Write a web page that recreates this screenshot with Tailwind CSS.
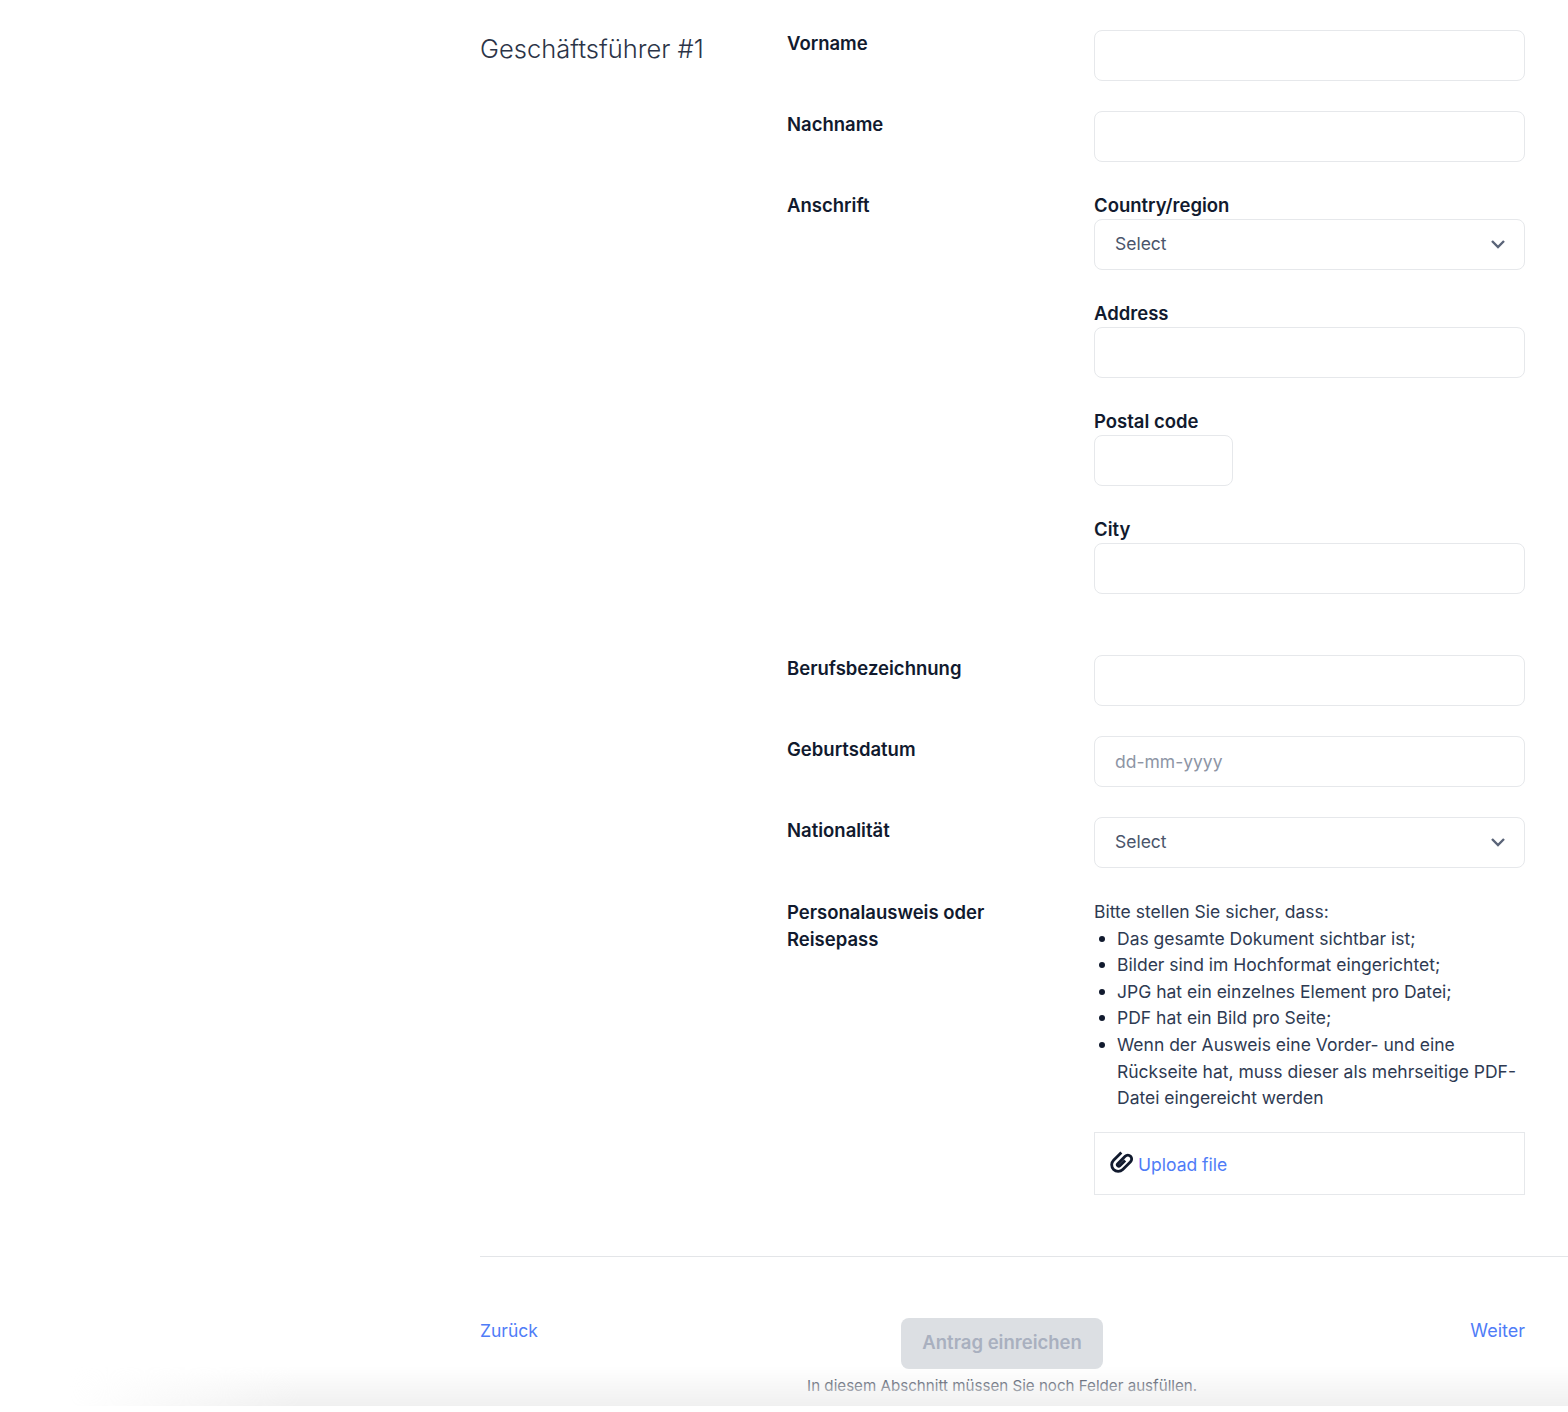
<!DOCTYPE html>
<html lang="de">
<head>
    <meta charset="UTF-8">
    <meta name="viewport" content="width=device-width, initial-scale=1.0">
    <title>Geschäftsführer</title>
    <script src="https://cdn.jsdelivr.net/npm/@tailwindcss/browser@4"></script>
</head>
<body class="relative h-[1412px] overflow-hidden bg-white font-['Inter',sans-serif] text-[17.5px] text-[#2e3a52]">
    <div class="pl-[480px]">
        <div class="flex pt-[30px] pr-[43px]">
            <h2 class="w-[307px] pt-[1px] text-[25.5px] leading-[36px] font-light text-[#2b3447]">Geschäftsführer #1</h2>

            <div class="flex w-[738px] flex-col">
                <!-- Vorname -->
                <div class="flex">
                    <label class="w-[307px] text-[18.5px] leading-[27px] font-semibold text-[#111a2e]">Vorname</label>
                    <input type="text" class="h-[51px] w-[431px] rounded-lg border border-[#e6e8eb]">
                </div>
                <!-- Nachname -->
                <div class="mt-[30px] flex">
                    <label class="w-[307px] text-[18.5px] leading-[27px] font-semibold text-[#111a2e]">Nachname</label>
                    <input type="text" class="h-[51px] w-[431px] rounded-lg border border-[#e6e8eb]">
                </div>
                <!-- Anschrift -->
                <div class="mt-[30px] flex">
                    <label class="w-[307px] text-[18.5px] leading-[27px] font-semibold text-[#111a2e]">Anschrift</label>
                    <div class="flex w-[431px] flex-col">
                        <label class="text-[18.5px] leading-[27px] font-semibold text-[#111a2e]">Country/region</label>
                        <div class="flex h-[51px] items-center justify-between rounded-lg border border-[#e6e8eb] pr-[18px] pl-[20px]">
                            <span class="text-[#4a556b]">Select</span>
                            <svg class="h-[12px] w-[16px] -translate-y-[1px]" viewBox="0 0 16 12" fill="none" stroke="#5a6478" stroke-width="2.4"><path d="M2 3l6 6 6-6"/></svg>
                        </div>
                        <label class="mt-[30px] text-[18.5px] leading-[27px] font-semibold text-[#111a2e]">Address</label>
                        <input type="text" class="h-[51px] w-full rounded-lg border border-[#e6e8eb]">
                        <label class="mt-[30px] text-[18.5px] leading-[27px] font-semibold text-[#111a2e]">Postal code</label>
                        <input type="text" class="h-[51px] w-[139px] rounded-lg border border-[#e6e8eb]">
                        <label class="mt-[30px] text-[18.5px] leading-[27px] font-semibold text-[#111a2e]">City</label>
                        <input type="text" class="h-[51px] w-full rounded-lg border border-[#e6e8eb]">
                    </div>
                </div>
                <!-- Berufsbezeichnung -->
                <div class="mt-[61px] flex">
                    <label class="w-[307px] text-[18.5px] leading-[27px] font-semibold text-[#111a2e]">Berufsbezeichnung</label>
                    <input type="text" class="h-[51px] w-[431px] rounded-lg border border-[#e6e8eb]">
                </div>
                <!-- Geburtsdatum -->
                <div class="mt-[30px] flex">
                    <label class="w-[307px] text-[18.5px] leading-[27px] font-semibold text-[#111a2e]">Geburtsdatum</label>
                    <input type="text" placeholder="dd-mm-yyyy" class="h-[51px] w-[431px] rounded-lg border border-[#e6e8eb] px-[20px] placeholder:text-[#8d95a5]">
                </div>
                <!-- Nationalität -->
                <div class="mt-[30px] flex">
                    <label class="w-[307px] text-[18.5px] leading-[27px] font-semibold text-[#111a2e]">Nationalität</label>
                    <div class="flex h-[51px] w-[431px] items-center justify-between rounded-lg border border-[#e6e8eb] pr-[18px] pl-[20px]">
                        <span class="text-[#4a556b]">Select</span>
                        <svg class="h-[12px] w-[16px] -translate-y-[1px]" viewBox="0 0 16 12" fill="none" stroke="#5a6478" stroke-width="2.4"><path d="M2 3l6 6 6-6"/></svg>
                    </div>
                </div>
                <!-- Personalausweis -->
                <div class="mt-[31px] flex">
                    <label class="w-[307px] pr-[60px] text-[18.5px] leading-[27px] font-semibold text-[#111a2e]">Personalausweis oder Reisepass</label>
                    <div class="w-[431px]">
                        <p class="leading-[26.6px]">Bitte stellen Sie sicher, dass:</p>
                        <ul class="leading-[26.6px]">
                            <li class="flex"><span class="mt-[10px] mr-[12px] ml-[5px] size-[6px] shrink-0 rounded-full bg-[#111a2e]"></span>Das gesamte Dokument sichtbar ist;</li>
                            <li class="flex"><span class="mt-[10px] mr-[12px] ml-[5px] size-[6px] shrink-0 rounded-full bg-[#111a2e]"></span>Bilder sind im Hochformat eingerichtet;</li>
                            <li class="flex"><span class="mt-[10px] mr-[12px] ml-[5px] size-[6px] shrink-0 rounded-full bg-[#111a2e]"></span>JPG hat ein einzelnes Element pro Datei;</li>
                            <li class="flex"><span class="mt-[10px] mr-[12px] ml-[5px] size-[6px] shrink-0 rounded-full bg-[#111a2e]"></span>PDF hat ein Bild pro Seite;</li>
                            <li class="flex"><span class="mt-[10px] mr-[12px] ml-[5px] size-[6px] shrink-0 rounded-full bg-[#111a2e]"></span><span>Wenn der Ausweis eine Vorder- und eine Rückseite hat, muss dieser als mehrseitige PDF-Datei eingereicht werden</span></li>
                        </ul>
                        <div class="mt-[20px] flex h-[63px] items-center gap-[5px] border border-[#e6e8eb] pt-[3px] pl-[14px]">
                            <svg class="h-[24px] w-[24px] -translate-y-[3px] overflow-visible" viewBox="0 0 24 24" fill="none" stroke="#111a2e" stroke-width="2.8" stroke-linejoin="round"><path transform="rotate(-45 12 12)" d="M19 5.500H8a6.500 6.500 0 0 0 0 13H19a3.800 3.800 0 0 0 0-7.600H8.500a1.500 1.500 0 0 0 0 3H16"/></svg>
                            <a href="#" class="text-[#4f7cf7]">Upload file</a>
                        </div>
                    </div>
                </div>
            </div>
        </div>

        <hr class="mt-[61px] border-t border-[#e3e5e8]">

        <div class="flex items-start justify-between pr-[43px]">
            <a href="#" class="mt-[61px] text-[#4f7cf7]">Zurück</a>
            <div class="mt-[61px] mr-[4px] flex flex-col items-center">
                <button class="h-[51px] w-[202px] rounded-lg bg-[#dcdfe3] text-[18.5px] font-semibold text-[#a9b0bf]">Antrag einreichen</button>
                <p class="mt-[7px] text-[15.15px] leading-[20px] text-[#222c42]">In diesem Abschnitt müssen Sie noch Felder ausfüllen.</p>
            </div>
            <a href="#" class="mt-[61px] text-[18px] leading-[26px] text-[#4f7cf7]">Weiter</a>
        </div>
    </div>

    <!-- Schatten am unteren Rand -->
    <div class="pointer-events-none absolute right-0 bottom-[6px] left-0 h-[40px] bg-gradient-to-t from-[#f0f0f0] to-transparent [mask-image:linear-gradient(to_right,transparent_70px,black_300px)]"></div>
</body>
</html>
